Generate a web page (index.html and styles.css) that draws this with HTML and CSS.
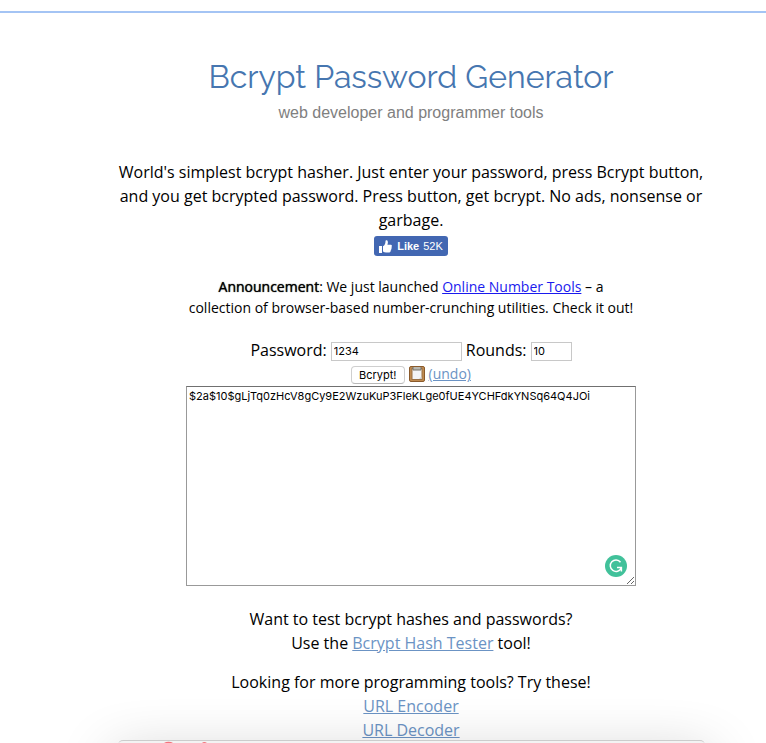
FILE: index.html
```html
<!DOCTYPE html>
<html lang="en">
<head>
<meta charset="utf-8">
<title>Bcrypt Password Generator</title>
<link rel="stylesheet" href="styles.css">
</head>
<body>
<div class="topline"></div>
<main class="page">
  <header class="heading">
    <h1>Bcrypt Password Generator</h1>
    <p class="tagline">web developer and programmer tools</p>
  </header>
  <p class="intro">World's simplest bcrypt hasher. Just enter your password, press Bcrypt button, and you get bcrypted password. Press button, get bcrypt. No ads, nonsense or garbage.</p>
  <button class="like" type="button">
    <svg width="13" height="13" viewBox="0 0 13 13" fill="#fff" aria-hidden="true"><path d="M0 6h3v7H0zM4 6.300C5.800 5.300 6.400 3.500 6.500 1.200C6.500.300 7.200 0 7.800.200C9.300.700 9 3.200 8.400 4.800H12C13.200 5 13.200 6.500 12.400 6.900C13 7.500 12.900 8.600 12.100 8.900C12.500 9.600 12.200 10.500 11.500 10.800C11.700 11.600 11.300 12.300 10.300 12.400H7C5.800 12.400 5 12 4 11.500Z"/></svg>
    <b>Like</b><span>52K</span>
  </button>
  <p class="announcement"><strong>Announcement</strong>: We just launched <a href="#numbers">Online Number Tools</a> – a collection of browser-based number-crunching utilities. Check it out!</p>
  <form class="tool">
    <div class="fields">
      <label for="password">Password:</label>
      <input id="password" class="password" type="text" value="1234">
      <label for="rounds">Rounds:</label>
      <input id="rounds" class="rounds" type="text" value="10">
    </div>
    <div class="actions">
      <button class="submit" type="button">Bcrypt!</button>
      <button class="copy" type="button" aria-label="Copy to clipboard">
        <svg width="16" height="16" viewBox="0 0 16 16" aria-hidden="true"><rect x=".5" y=".5" width="15" height="15" rx="1.500" fill="#c08b50" stroke="#8a5a2b"/><rect x="3" y="2.500" width="10" height="11" fill="#f4f4f6" stroke="#9a7044"/><path d="M4 1h8v3H4z" fill="#b9b8b0"/><path d="M4 1v3h8V1" fill="none" stroke="#77736a"/><path d="M10 13l2.500-2.500V13z" fill="#cfcfd4"/></svg>
      </button>
      <a href="#undo">(undo)</a>
    </div>
    <div class="output">
      <textarea aria-label="Bcrypted password" spellcheck="false">$2a$10$gLjTq0zHcV8gCy9E2WzuKuP3FleKLge0fUE4YCHFdkYNSq64Q4JOi</textarea>
      <svg class="checker" width="22" height="22" viewBox="0 0 22 22" aria-hidden="true"><circle cx="11" cy="11" r="11" fill="#41c19a"/><path d="M15.500 7.200A5.700 5.700 0 1 0 16.200 13M12 12.600H16.400V16.500" fill="none" stroke="#fff" stroke-width="1.500"/></svg>
    </div>
  </form>
  <p class="more">Want to test bcrypt hashes and passwords?<br>Use the <a href="#tester">Bcrypt Hash Tester</a> tool!</p>
  <nav class="more">Looking for more programming tools? Try these!<br><a href="#encoder">URL Encoder</a><br><a href="#decoder">URL Decoder</a></nav>
</main>
<div class="sheet"><svg width="48" height="2" viewBox="0 0 48 2" aria-hidden="true"><path d="M0 2Q3 0 7 1L9 2ZM38 2Q40 0 43 2Z" fill="#f4737c"/></svg></div>
</body>
</html>
```
FILE: styles.css
```css
body {
  margin: 0;
  height: 100vh;
  overflow: hidden;
  background: #fff;
  color: #000;
  font: 16px/24px "Open Sans", sans-serif;
  text-align: center;
}

.topline {
  height: 2px;
  margin-top: 11px;
  background: #a4c4f4;
}

.page {
  max-width: 600px;
  margin: 0 auto;
  padding-left: 56px;
}

h1 {
  margin: 0;
  padding-top: 44px;
  color: #4676b0;
  font: 400 32px/40px Raleway, Lato, sans-serif;
}

p {
  margin: 0;
}

.tagline {
  margin-top: 4px;
  color: #808080;
  font-family: "Liberation Sans", Arial, sans-serif;
}

.intro {
  margin-top: 35px;
}

a {
  color: #6b93c4;
}

.like {
  display: flex;
  align-items: center;
  gap: 4px;
  height: 20px;
  margin: 4px auto 0;
  padding: 0 5px;
  border: 0;
  border-radius: 3px;
  background: #4267b2;
  color: #fff;
  font: 11px/20px "Liberation Sans", Arial, sans-serif;
}

.like b {
  margin-left: 1px;
}

.announcement {
  max-width: 450px;
  margin: 20px auto 0;
  font-size: 14px;
  line-height: 21px;
}

.announcement strong {
  font-weight: 400;
  text-shadow: 0 0 1px #000;
}

.announcement a {
  color: #1a1aee;
}

.fields,
.actions {
  display: flex;
  align-items: center;
  justify-content: center;
  gap: 4px;
}

.fields {
  margin-top: 20px;
}

input {
  box-sizing: border-box;
  height: 19px;
  margin: 2px 0 0;
  padding: 0 2px;
  border: 1px solid #c8c8c8;
  font: 11px Inter, sans-serif;
}

.password {
  width: 131px;
}

.rounds {
  width: 41px;
}

.actions {
  height: 24px;
}

.actions a {
  font-size: 14px;
}

.submit {
  height: 18px;
  margin: 2px 0 0;
  padding: 0 7px;
  border: 1px solid #cfcfcf;
  border-bottom-color: #b8b8b8;
  border-radius: 4px;
  background: #fff;
  color: #000;
  font: 11px Inter, sans-serif;
}

.copy {
  display: flex;
  padding: 0;
  border: 0;
  background: none;
}

.output {
  position: relative;
  max-width: 450px;
  margin: 0 auto;
}

textarea {
  box-sizing: border-box;
  display: block;
  width: 100%;
  height: 200px;
  padding: 2px;
  border: 1px solid #999;
  border-top-color: #707070;
  font: 11px/14px Inter, sans-serif;
}

.checker {
  position: absolute;
  right: 9px;
  bottom: 9px;
}

.more {
  margin-top: 21px;
}

.more + .more {
  margin-top: 15px;
}

.sheet {
  position: fixed;
  bottom: -10px;
  left: 118px;
  right: 61px;
  height: 12px;
  border-top: 1px solid #ccc;
  border-radius: 5px 5px 0 0;
  background: #f3f3f3;
  box-shadow: 0 24px 56px 6px rgba(0, 0, 0, 0.3);
  text-align: left;
  pointer-events: none;
}

.sheet svg {
  display: block;
  margin-left: 46px;
}
```
